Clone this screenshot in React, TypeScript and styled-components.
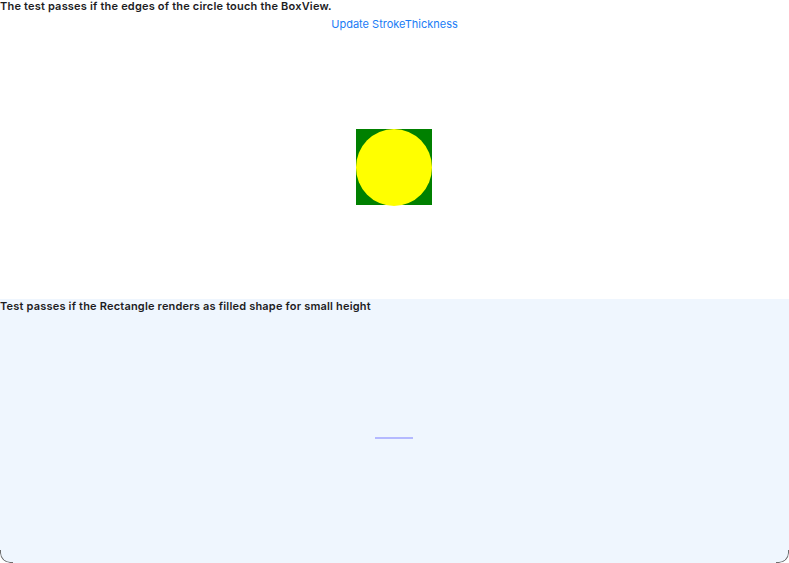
import React from "react";
import styled, { createGlobalStyle } from "styled-components";

const Global = createGlobalStyle`
  html, body { margin: 0; padding: 0; background: #ffffff; }
  body { font-family: Inter, "Noto Sans", sans-serif; -webkit-font-smoothing: antialiased; }
  #root { width: 789px; height: 563px; }
`;

const Window = styled.div`
  width: 789px;
  height: 563px;
  display: flex;
  flex-direction: column;
  overflow: hidden;
  border-radius: 0 0 10px 10px;
  position: relative;
`;

const Section = styled.section<{ $bg: string; $h: number }>`
  height: ${(p) => p.$h}px;
  background: ${(p) => p.$bg};
  display: flex;
  flex-direction: column;
  align-items: stretch;
`;

const Caption = styled.div<{ $top?: number }>`
  font-size: 11px;
  font-weight: 600;
  letter-spacing: 0.19px;
  color: #1d1d1f;
  line-height: 13px;
  height: 13px;
  padding-top: ${(p) => p.$top ?? 0}px;
  white-space: nowrap;
`;

const LinkButton = styled.button`
  align-self: center;
  background: none;
  border: none;
  padding: 0;
  margin-top: 4px;
  font-family: inherit;
  font-size: 11px;
  line-height: 14px;
  color: #1a7cf5;
  cursor: pointer;
`;

const Stage = styled.div<{ $pt?: number; $pr?: number }>`
  flex: 1;
  display: flex;
  align-items: center;
  justify-content: center;
  padding-top: ${(p) => p.$pt ?? 0}px;
  padding-right: ${(p) => p.$pr ?? 0}px;
`;

const GreenBox = styled.div`
  width: 76px;
  height: 76px;
  background: #008000;
  display: flex;
  align-items: center;
  justify-content: center;
`;

const Circle = styled.div`
  width: 77px;
  height: 77px;
  border-radius: 50%;
  background: #ffff00;
`;

const ThinRect = styled.div`
  width: 38px;
  height: 2px;
  background: #b4b9ff;
`;

const Corner = styled.div<{ $side: "left" | "right" }>`
  position: absolute;
  bottom: 0;
  ${(p) => p.$side}: 0;
  width: 12px;
  height: 12px;
  border-bottom: 1px solid #6d6d6d;
  ${(p) => (p.$side === "left" ? "border-left" : "border-right")}: 1px solid #6d6d6d;
  ${(p) => (p.$side === "left" ? "border-bottom-left-radius" : "border-bottom-right-radius")}: 10px;
  pointer-events: none;
`;

export default function App() {
  return (
    <Window>
      <Global />
      <Section $bg="#ffffff" $h={299}>
        <Caption>The test passes if the edges of the circle touch the BoxView.</Caption>
        <LinkButton>Update StrokeThickness</LinkButton>
        <Stage $pt={4} $pr={1}>
          <GreenBox>
            <Circle />
          </GreenBox>
        </Stage>
      </Section>
      <Section $bg="#eff6fe" $h={264}>
        <Caption $top={1}>Test passes if the Rectangle renders as filled shape for small height</Caption>
        <Stage $pr={1}>
          <ThinRect />
        </Stage>
      </Section>
      <Corner $side="left" />
      <Corner $side="right" />
    </Window>
  );
}
